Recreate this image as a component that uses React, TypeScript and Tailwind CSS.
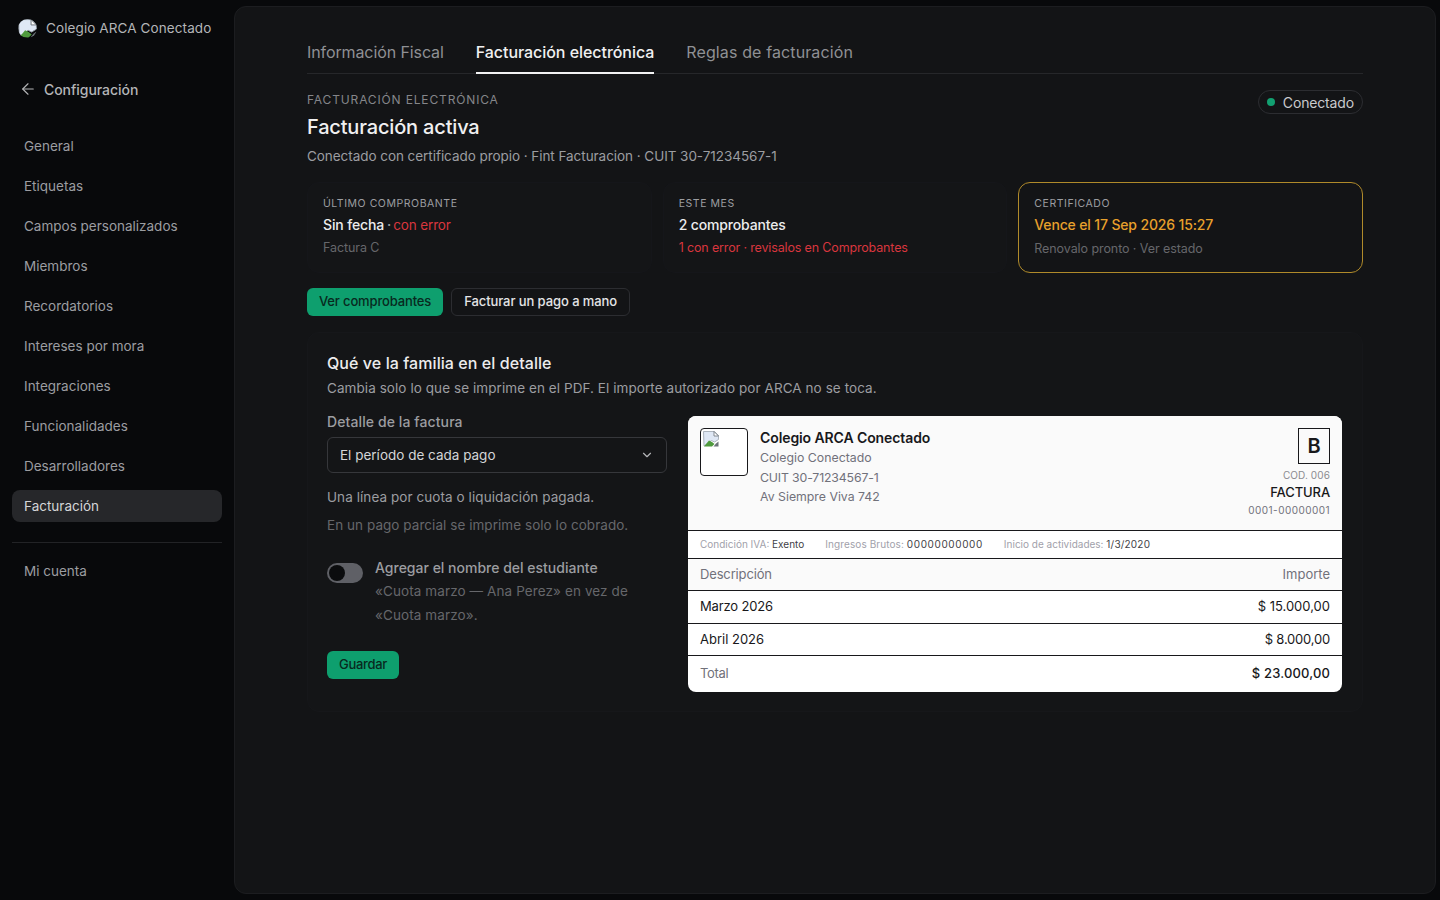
import { ArrowLeft, ChevronDown } from "lucide-react"

const navItems = [
  "General",
  "Etiquetas",
  "Campos personalizados",
  "Miembros",
  "Recordatorios",
  "Intereses por mora",
  "Integraciones",
  "Funcionalidades",
  "Desarrolladores",
]

function BrokenImage({ className }: { className?: string }) {
  return (
    <svg viewBox="0 0 16 16" className={className}>
      <path d="M0.5 0.5h11l4 4v4l-4 2.5-3-1.5-7.5 5.5z" fill="#dfe8f5" stroke="#9aa3ad" strokeWidth="0.8" />
      <path d="M11 0.5v4.5h4.5z" fill="#fff" stroke="#6b7278" strokeWidth="0.8" />
      <path d="M1 15.5 6 9.5l3 1.5 2.5 2-2.5 2.5z" fill="#4f9a3d" />
      <path d="M10.5 15.5h5v-5l-2.5 2z" fill="#6b7278" />
    </svg>
  )
}

function Sidebar() {
  return (
    <aside className="flex w-[234px] shrink-0 flex-col">
      <div className="flex h-[56px] items-center gap-[9px] pl-[18px]">
        <div className="h-[19px] w-[19px] overflow-hidden rounded-full">
          <BrokenImage className="h-[19px] w-[19px]" />
        </div>
        <span className="text-[13.5px] tracking-[0.1px] text-[#b4b5b8]">Colegio ARCA Conectado</span>
      </div>
      <div className="mt-[21px] flex h-[24px] items-center gap-[7px] pl-[19px] text-[#b4b5b8]">
        <ArrowLeft className="h-[18px] w-[18px]" strokeWidth={1.5} />
        <span className="text-[14px] font-medium tracking-[-0.05px]">Configuración</span>
      </div>
      <nav className="mt-[29px] flex flex-col gap-[8px] px-[12px]">
        {navItems.map((item) => (
          <div key={item} className="flex h-[32px] items-center px-[12px] text-[13.5px] text-[#9c9da1]">
            {item}
          </div>
        ))}
        <div className="flex h-[32px] items-center rounded-[8px] bg-[#26272a] px-[12px] text-[13.5px] text-[#d4d5d7]">
          Facturación
        </div>
      </nav>
      <div className="mx-[12px] mt-[20px] h-px bg-[#222326]" />
      <div className="mx-[12px] mt-[12px] flex h-[32px] items-center px-[12px] text-[13.5px] text-[#9c9da1]">
        Mi cuenta
      </div>
    </aside>
  )
}

function Tabs() {
  return (
    <div className="flex gap-[32px] border-b border-[#26272a]">
      <div className="flex h-[38px] items-start pt-[5px] text-[16px] tracking-[-0.1px] text-[#8f9094]">Información Fiscal</div>
      <div className="-mb-px flex h-[39px] items-start border-b-2 border-[#f2f2f3] pt-[5px] text-[16px] font-medium tracking-[-0.05px] text-[#f0f0f1]">
        Facturación electrónica
      </div>
      <div className="flex h-[38px] items-start pt-[5px] text-[16px] tracking-[0.12px] text-[#8f9094]">Reglas de facturación</div>
    </div>
  )
}

function StatCard({ label, children, sub, highlight }: { label: string; children: React.ReactNode; sub: React.ReactNode; highlight?: boolean }) {
  return (
    <div
      className={
        highlight
          ? "flex h-[91px] flex-col rounded-[12px] border border-[#b08a2a] bg-[#131416] px-[15px] pt-[14px]"
          : "flex h-[91px] flex-col rounded-[12px] border border-[#15161a] bg-[#141517] px-[15px] pt-[14px]"
      }
    >
      <div className="text-[10.5px] leading-[14px] tracking-[0.55px] text-[#9c9da1]">{label}</div>
      <div className="mt-[3px] text-[14px] font-medium leading-[22px] tracking-[-0.15px]">{children}</div>
      <div className={highlight ? "mt-[3px] text-[12.5px] leading-[20px] tracking-[-0.08px]" : "mt-[2px] text-[12.5px] leading-[20px] tracking-[-0.08px]"}>
        {sub}
      </div>
    </div>
  )
}

function InvoicePreview() {
  return (
    <div className="mt-[4px] flex w-[654px] flex-col self-start overflow-hidden rounded-[8px] bg-white text-[#18181b]">
      <div className="flex h-[114px] justify-between bg-[#fafafa] px-[12px] pt-[12px]">
        <div className="flex gap-[12px]">
          <div className="h-[48px] w-[48px] rounded-[4px] border border-[#18181b] bg-white p-[2px]">
            <BrokenImage className="h-[16px] w-[16px]" />
          </div>
          <div className="flex flex-col">
            <div className="text-[14px] font-semibold leading-[20px] tracking-[-0.1px]">Colegio ARCA Conectado</div>
            <div className="text-[12.3px] leading-[20px] text-[#71717a]">Colegio Conectado</div>
            <div className="text-[12.3px] leading-[19px] tracking-[-0.15px] text-[#71717a]">CUIT 30-71234567-1</div>
            <div className="text-[12.3px] leading-[19px] text-[#71717a]">Av Siempre Viva 742</div>
          </div>
        </div>
        <div className="flex flex-col items-end">
          <div className="flex h-[36px] w-[32px] items-center justify-center border border-[#18181b] text-[20px] font-semibold">
            B
          </div>
          <div className="mt-[4px] text-[10px] leading-[14px] tracking-[0.1px] text-[#8a8a90]">COD. 006</div>
          <div className="mt-[1px] text-[13px] font-medium leading-[18px] tracking-[-0.1px]">FACTURA</div>
          <div className="mt-[1px] text-[10px] leading-[16px] tracking-[0.45px] text-[#71717a]">0001-00000001</div>
        </div>
      </div>
      <div className="flex h-[29px] items-center gap-[21px] border-y border-[#18181b] bg-white px-[12px] text-[10px] text-[#a1a1aa]">
        <span>
          Condición IVA: <span className="text-[#3f3f46]">Exento</span>
        </span>
        <span className="tracking-[0.1px]">
          Ingresos Brutos: <span className="tracking-[0.6px] text-[#3f3f46]">00000000000</span>
        </span>
        <span>
          Inicio de actividades: <span className="tracking-[0.2px] text-[#3f3f46]">1/3/2020</span>
        </span>
      </div>
      <div className="flex h-[32px] items-center justify-between border-b border-[#18181b] bg-[#fafafa] px-[12px] text-[13px] text-[#71717a]">
        <span className="tracking-[-0.15px]">Descripción</span>
        <span>Importe</span>
      </div>
      <div className="flex h-[33px] items-center justify-between border-b border-[#18181b] px-[12px] text-[13px]">
        <span className="tracking-[-0.15px]">Marzo 2026</span>
        <span>$ 15.000,00</span>
      </div>
      <div className="flex h-[32px] items-center justify-between border-b border-[#18181b] px-[12px] text-[13px]">
        <span>Abril 2026</span>
        <span className="tracking-[-0.2px]">$ 8.000,00</span>
      </div>
      <div className="flex h-[36px] items-center justify-between px-[12px] text-[13px]">
        <span className="tracking-[-0.3px] text-[#71717a]">Total</span>
        <span className="font-medium tracking-[0.15px]">$ 23.000,00</span>
      </div>
    </div>
  )
}

export default function App() {
  return (
    <div className="flex h-[900px] w-[1440px] overflow-hidden bg-[#08090b] font-['Inter',sans-serif]">
      <Sidebar />
      <main className="mb-[6px] mr-[4px] mt-[6px] flex-1 rounded-[12px] border border-[#1c1d20] bg-[#131416] px-[72px] pt-[28px]">
        <Tabs />
        <div className="mt-[18px] flex items-start justify-between">
          <div>
            <div className="text-[12px] leading-[16px] tracking-[0.85px] text-[#85868a]">FACTURACIÓN ELECTRÓNICA</div>
            <h1 className="mt-[5px] text-[20px] font-medium leading-[28px] tracking-[-0.17px] text-[#f0f0f1]">Facturación activa</h1>
            <p className="mt-[5px] text-[13.5px] leading-[20px] tracking-[-0.05px] text-[#9c9da1]">
              Conectado con certificado propio · Fint Facturacion · CUIT 30-71234567-1
            </p>
          </div>
          <div className="-mt-[2px] flex h-[24px] items-center gap-[8px] rounded-full border border-[#2c2d31] px-[8px] text-[14px] tracking-[-0.15px] text-[#c9cacd]">
            <span className="h-[8px] w-[8px] rounded-full bg-[#12a071]" />
            Conectado
          </div>
        </div>
        <div className="mt-[16px] grid grid-cols-3 gap-[11px]">
          <StatCard label="ÚLTIMO COMPROBANTE" sub={<span className="text-[#66676b]">Factura C</span>}>
            <span className="text-[#ececed]">Sin fecha</span>
            <span className="tracking-[-0.8px] text-[#9c9da1]"> · </span>
            <span className="text-[13.5px] font-normal text-[#d9363e]">con error</span>
          </StatCard>
          <StatCard label="ESTE MES" sub={<span className="tracking-[-0.15px] text-[#d9363e]">1 con error · revisalos en Comprobantes</span>}>
            <span className="text-[#ececed]">2 comprobantes</span>
          </StatCard>
          <StatCard highlight label="CERTIFICADO" sub={<span className="text-[#66676b]">Renovalo pronto · Ver estado</span>}>
            <span className="text-[#e8a02c]">Vence el 17 Sep 2026 15:27</span>
          </StatCard>
        </div>
        <div className="mt-[15px] flex gap-[8px]">
          <button className="flex h-[28px] items-center rounded-[6px] bg-[#0e9f6e] px-[12px] text-[13px] font-medium tracking-[-0.15px] text-[#08291e]">
            Ver comprobantes
          </button>
          <button className="flex h-[28px] items-center rounded-[6px] border border-[#2c2d31] px-[12px] text-[13px] font-medium tracking-[-0.08px] text-[#e4e4e6]">
            Facturar un pago a mano
          </button>
        </div>
        <section className="mt-[16px] rounded-[12px] border border-[#16171a] bg-[#141517] p-[19px] pt-[20px]">
          <h2 className="text-[16px] font-medium leading-[20px] tracking-[0.07px] text-[#ececed]">Qué ve la familia en el detalle</h2>
          <p className="mt-[5px] text-[13.5px] leading-[20px] tracking-[0.07px] text-[#9c9da1]">
            Cambia solo lo que se imprime en el PDF. El importe autorizado por ARCA no se toca.
          </p>
          <div className="mt-[14px] flex gap-[21px]">
            <div className="w-[340px] shrink-0">
              <div className="text-[14px] font-medium leading-[20px] tracking-[0.1px] text-[#9c9da1]">Detalle de la factura</div>
              <div className="mt-[5px] flex h-[36px] items-center justify-between rounded-[6px] border border-[#36373b] px-[12px] text-[13.5px] text-[#d4d5d7]">
                El período de cada pago
                <ChevronDown className="h-[14px] w-[14px] text-[#b4b5b8]" />
              </div>
              <p className="mt-[14px] text-[13.5px] leading-[20px] tracking-[0.07px] text-[#9c9da1]">Una línea por cuota o liquidación pagada.</p>
              <p className="mt-[8px] text-[13.5px] leading-[20px] tracking-[0.05px] text-[#66676b]">En un pago parcial se imprime solo lo cobrado.</p>
              <div className="mt-[23px] flex gap-[12px]">
                <div className="mt-[5px] flex h-[20px] w-[36px] shrink-0 items-center rounded-full bg-[#5f6066] px-[2px]">
                  <div className="h-[16px] w-[16px] rounded-full bg-[#0b0c0e]" />
                </div>
                <div>
                  <div className="text-[14px] font-medium leading-[20px] text-[#9c9da1]">Agregar el nombre del estudiante</div>
                  <p className="mt-[1px] text-[13.5px] leading-[24px] tracking-[0.1px] text-[#66676b]">
                    «Cuota marzo — Ana Perez» en vez de «Cuota marzo».
                  </p>
                </div>
              </div>
              <button className="mt-[24px] flex h-[28px] items-center rounded-[6px] bg-[#0e9f6e] px-[12px] text-[13px] font-medium tracking-[-0.3px] text-[#08291e]">
                Guardar
              </button>
            </div>
            <InvoicePreview />
          </div>
        </section>
      </main>
    </div>
  )
}
